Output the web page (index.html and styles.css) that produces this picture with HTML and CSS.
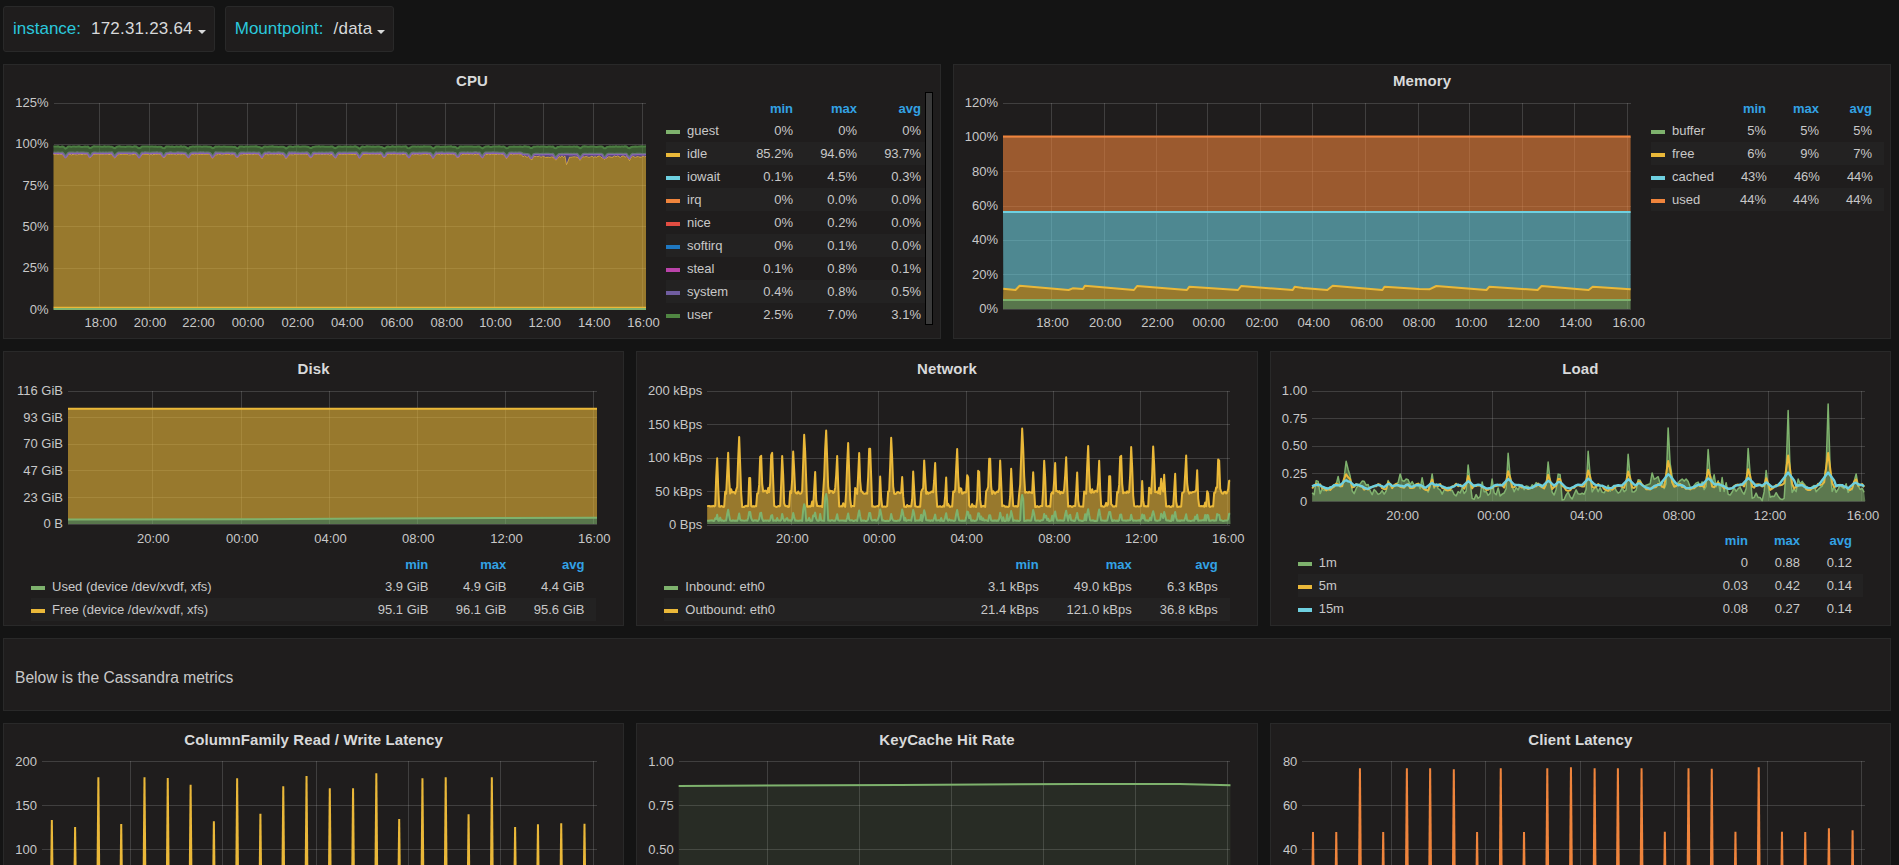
FILE: index.html
```html
<!DOCTYPE html>
<html lang="en">
<head>
<meta charset="utf-8">
<title>Dashboard</title>
<link rel="stylesheet" href="styles.css">
</head>
<body>
<main class="dash">
  <nav class="vars">
    <div class="var"><span class="var-name">instance:</span><span class="var-value">172.31.23.64</span><i class="caret"></i></div>
    <div class="var"><span class="var-name">Mountpoint:</span><span class="var-value">/data</span><i class="caret"></i></div>
  </nav>

  <section class="row two">
    <article class="panel">
      <h2>CPU</h2>
      <div class="side">
        <svg class="chart" id="cpu"></svg>
        <div class="legend lg-cpu">
          <div class="lg head"><span></span><b>min</b><b>max</b><b>avg</b></div>
          <div class="lg"><span class="nm"><i class="c1"></i>guest</span><span>0%</span><span>0%</span><span>0%</span></div>
          <div class="lg"><span class="nm"><i class="c2"></i>idle</span><span>85.2%</span><span>94.6%</span><span>93.7%</span></div>
          <div class="lg"><span class="nm"><i class="c3"></i>iowait</span><span>0.1%</span><span>4.5%</span><span>0.3%</span></div>
          <div class="lg"><span class="nm"><i class="c4"></i>irq</span><span>0%</span><span>0.0%</span><span>0.0%</span></div>
          <div class="lg"><span class="nm"><i class="c5"></i>nice</span><span>0%</span><span>0.2%</span><span>0.0%</span></div>
          <div class="lg"><span class="nm"><i class="c6"></i>softirq</span><span>0%</span><span>0.1%</span><span>0.0%</span></div>
          <div class="lg"><span class="nm"><i class="c7"></i>steal</span><span>0.1%</span><span>0.8%</span><span>0.1%</span></div>
          <div class="lg"><span class="nm"><i class="c8"></i>system</span><span>0.4%</span><span>0.8%</span><span>0.5%</span></div>
          <div class="lg"><span class="nm"><i class="c9"></i>user</span><span>2.5%</span><span>7.0%</span><span>3.1%</span></div>
          <div class="scrollbar"></div>
        </div>
      </div>
    </article>
    <article class="panel">
      <h2>Memory</h2>
      <div class="side">
        <svg class="chart" id="memory"></svg>
        <div class="legend lg-mem">
          <div class="lg head"><span></span><b>min</b><b>max</b><b>avg</b></div>
          <div class="lg"><span class="nm"><i class="c1"></i>buffer</span><span>5%</span><span>5%</span><span>5%</span></div>
          <div class="lg"><span class="nm"><i class="c2"></i>free</span><span>6%</span><span>9%</span><span>7%</span></div>
          <div class="lg"><span class="nm"><i class="c3"></i>cached</span><span>43%</span><span>46%</span><span>44%</span></div>
          <div class="lg"><span class="nm"><i class="c4"></i>used</span><span>44%</span><span>44%</span><span>44%</span></div>
        </div>
      </div>
    </article>
  </section>

  <section class="row three r2">
    <article class="panel">
      <h2>Disk</h2>
      <svg class="chart tall" id="disk"></svg>
      <div class="legend lg-disk">
        <div class="lg head"><span></span><b>min</b><b>max</b><b>avg</b></div>
        <div class="lg"><span class="nm"><i class="c1"></i>Used (device /dev/xvdf, xfs)</span><span>3.9 GiB</span><span>4.9 GiB</span><span>4.4 GiB</span></div>
        <div class="lg"><span class="nm"><i class="c2"></i>Free (device /dev/xvdf, xfs)</span><span>95.1 GiB</span><span>96.1 GiB</span><span>95.6 GiB</span></div>
      </div>
    </article>
    <article class="panel">
      <h2>Network</h2>
      <svg class="chart tall" id="network"></svg>
      <div class="legend lg-net">
        <div class="lg head"><span></span><b>min</b><b>max</b><b>avg</b></div>
        <div class="lg"><span class="nm"><i class="c1"></i>Inbound: eth0</span><span>3.1 kBps</span><span>49.0 kBps</span><span>6.3 kBps</span></div>
        <div class="lg"><span class="nm"><i class="c2"></i>Outbound: eth0</span><span>21.4 kBps</span><span>121.0 kBps</span><span>36.8 kBps</span></div>
      </div>
    </article>
    <article class="panel">
      <h2>Load</h2>
      <svg class="chart short" id="load"></svg>
      <div class="legend lg-load">
        <div class="lg head"><span></span><b>min</b><b>max</b><b>avg</b></div>
        <div class="lg"><span class="nm"><i class="c1"></i>1m</span><span>0</span><span>0.88</span><span>0.12</span></div>
        <div class="lg"><span class="nm"><i class="c2"></i>5m</span><span>0.03</span><span>0.42</span><span>0.14</span></div>
        <div class="lg"><span class="nm"><i class="c3"></i>15m</span><span>0.08</span><span>0.27</span><span>0.14</span></div>
      </div>
    </article>
  </section>

  <section class="panel note"><p>Below is the Cassandra metrics</p></section>

  <section class="row three">
    <article class="panel"><h2>ColumnFamily Read / Write Latency</h2><svg class="chart" id="cf"></svg></article>
    <article class="panel"><h2>KeyCache Hit Rate</h2><svg class="chart" id="keycache"></svg></article>
    <article class="panel"><h2>Client Latency</h2><svg class="chart" id="client"></svg></article>
  </section>
</main>
<script src="charts.js"></script>
</body>
</html>
```
FILE: styles.css
```css
* { box-sizing: border-box; }
html, body { margin: 0; height: 865px; overflow: hidden; background: #141414; }
body { font-family: "Liberation Sans", Arial, sans-serif; color: #c8c8c8; font-size: 13px; }
.dash { display: flex; flex-direction: column; gap: 12px; padding: 6px 8px 0 3px; }
.vars { display: flex; gap: 10px; }
.var { display: flex; align-items: center; height: 46px; padding: 0 8px 0 9px; background: #1f1d1d; border: 1px solid #292929; border-radius: 3px; font-size: 17px; }
.var-name { color: #2bc8dc; margin-right: 10px; }
.var-value { color: #d8d9da; letter-spacing: .2px; }
.caret { width: 0; height: 0; margin: 5px 0 0 5px; border-left: 4px solid transparent; border-right: 4px solid transparent; border-top: 4px solid #d8d9da; }
.row { display: grid; gap: 12px; }
.two { grid-template-columns: 1fr 1fr; }
.three { grid-template-columns: 1fr 1fr 1fr; }
.panel { height: 275px; background: #1f1d1d; border: 1px solid #292929; min-width: 0; }
.panel h2 { height: 32px; margin: 0; padding-top: 7px; font-size: 15px; line-height: 18px; font-weight: 700; letter-spacing: .12px; text-align: center; color: #d8d9da; }
.r2 .panel h2 { padding-top: 8px; }
.note { height: 73px; display: flex; align-items: center; padding: 7px 0 0 11px; font-size: 15.6px; }
.note p { margin: 0; }
.side { display: flex; }
.chart { display: block; width: 100%; height: 241px; flex: 1; min-width: 0; overflow: visible; }
.chart.tall { height: 169px; }
.chart.short { height: 145px; }
.chart text { font: 13px "Liberation Sans", Arial, sans-serif; fill: #c8c8c8; }
.legend { position: relative; flex: none; }
.lg { display: grid; grid-template-columns: 1fr repeat(3, var(--col)); align-items: center; height: 23px; padding-right: var(--pad); text-align: right; white-space: nowrap; }
.lg.head { height: 22px; }
.lg b { color: #33a2e5; font-weight: 700; }
.lg:nth-child(odd):not(.head) { background: #232222; }
.nm { display: flex; align-items: center; text-align: left; }
.nm i { flex: none; width: 14px; height: 4px; margin: 2px 7px 0 0; }
.lg-cpu { width: 259px; margin-right: 15px; --col: 64px; --pad: 4px; }
.lg-mem { width: 233px; margin-right: 6px; --col: 53px; --pad: 12px; }
.lg-disk { margin: 0 27px; --col: 78px; --pad: 12px; }
.lg-net { margin: 0 27px; --pad: 12px; }
.lg-net .lg { grid-template-columns: 1fr 93px 93px 86px; }
.lg-load { margin: 0 27px; --col: 52px; --pad: 11px; }
.c1 { background: #7eb26d; }
.c2 { background: #eab839; }
.c3 { background: #6ed0e0; }
.c4 { background: #ef843c; }
.c5 { background: #e24d42; }
.c6 { background: #1f78c1; }
.c7 { background: #ba43a9; }
.c8 { background: #705da0; }
.c9 { background: #508642; }
.scrollbar { position: absolute; top: -5px; right: -8px; width: 8px; height: 233px; background: #3a3a3a; border: 1px solid #000; }
```
FILE: charts.js
```js
(function () {
  var NS = 'http://www.w3.org/2000/svg';
  var G = '#7eb26d', Y = '#eab839', C = '#6ed0e0', O = '#ef843c', P = '#705da0', D = '#508642';
  var seed = 7;
  function rnd() { seed = (seed * 16807) % 2147483647; return (seed % 100000) / 100000; }
  function el(tag, attrs, parent, txt) {
    var e = document.createElementNS(NS, tag);
    for (var k in attrs) e.setAttribute(k, attrs[k]);
    if (txt) e.textContent = txt;
    parent.appendChild(e);
    return e;
  }
  function d(pts) { return pts.map(function (p) { return p[0].toFixed(1) + ' ' + p[1].toFixed(1); }).join('L'); }
  function map(off, arr) { return arr.map(function (p) { return [off + p[0] / 2.45, p[1]]; }); }

  function setup(id, c) {
    var svg = document.getElementById(id), r = svg.getBoundingClientRect();
    var g = el('g', { transform: 'translate(' + (-r.left) + ' ' + (-r.top) + ')' }, svg);
    function grid(x1, y1, x2, y2) {
      el('line', { x1: x1, y1: y1, x2: x2, y2: y2, stroke: 'rgba(200,200,200,.2)', 'shape-rendering': 'crispEdges' }, g);
    }
    c.ys.forEach(function (y) {
      var py = Math.round(y[1]) + 0.5;
      grid(c.x0, py, c.x1, py);
      el('text', { x: c.x0 - 5, y: y[1] + 4.5, 'text-anchor': 'end' }, g, y[0]);
    });
    c.xs.forEach(function (x) {
      var px = Math.round(x[1]) + 0.5;
      grid(px, c.top, px, c.bot);
      if (c.ly) el('text', { x: x[1] + 1.5, y: c.ly + 4.5, 'text-anchor': 'middle' }, g, x[0]);
    });
    return g;
  }
  function band(g, top, bottom, color, lw, op, lineColor) {
    el('path', { d: 'M' + d(top) + 'L' + d(bottom.slice().reverse()) + 'Z', fill: color, 'fill-opacity': op === undefined ? 0.6 : op }, g);
    if (lw) el('path', { d: 'M' + d(top), fill: 'none', stroke: lineColor || color, 'stroke-width': lw, 'stroke-linejoin': 'round' }, g);
  }
  function flat(x0, x1, y) { return [[x0, y], [x1, y]]; }
  function ticks(labels, xs) { return labels.map(function (l, i) { return [l, xs[i]]; }); }
  var H12 = ['18:00', '20:00', '22:00', '00:00', '02:00', '04:00', '06:00', '08:00', '10:00', '12:00', '14:00', '16:00'];
  var H6 = ['20:00', '00:00', '04:00', '08:00', '12:00', '16:00'];

  /* CPU */
  (function () {
    var x0 = 53.5, x1 = 646;
    var g = setup('cpu', {
      x0: x0, x1: x1, top: 102.5, bot: 309, ly: 322,
      ys: [['125%', 102.5], ['100%', 143.8], ['75%', 185.1], ['50%', 226.4], ['25%', 267.7], ['0%', 309]],
      xs: ticks(H12, [99.2, 148.6, 197.1, 246.5, 296.3, 345.7, 395.5, 445.3, 493.9, 543.3, 592.7, 642])
    });
    var idle = [], sys = [], usr = [];
    for (var x = x0; x <= x1; x += 1.5) {
      var k = ((x - 65.7) % 24.5 + 24.5) % 24.5;
      var dx = Math.min(k, 24.5 - k);
      var dip = dx < 2.5 ? (2.5 - dx) * 1.7 : 0;
      var late = x > 522 ? 1 : 0;
      var i = 154 + rnd() * 0.8 + dip + late * (1.3 + rnd() * 1.6);
      if (Math.abs(x - 567) < 1.6) i = 168 - Math.abs(x - 567) * 7;
      idle.push([x, i]);
      sys.push([x, 152.6 + rnd() * 0.4 + dip * 1.1 + late * 1.3]);
      usr.push([x, 146.3 + rnd() * 0.6 + dip * 0.5]);
    }
    var gb = flat(x0, x1, 309), ib = flat(x0, x1, 307.6);
    band(g, idle, ib, Y, 1);
    el('path', { d: 'M' + d(ib), stroke: Y, 'stroke-width': 1.5, fill: 'none' }, g);
    band(g, sys, idle, P, 2.5, 0.6, '#8a62b8');
    band(g, usr, sys, D, 2, 0.6, '#4c7f42');
    el('path', { d: 'M' + d(gb), stroke: G, 'stroke-width': 2, fill: 'none' }, g);
  })();

  /* Memory */
  (function () {
    var x0 = 1003, x1 = 1630.6;
    var g = setup('memory', {
      x0: x0, x1: x1, top: 102.5, bot: 309, ly: 322,
      ys: [['120%', 102.5], ['100%', 136.9], ['80%', 171.2], ['60%', 205.6], ['40%', 239.9], ['20%', 274.3], ['0%', 308.6]],
      xs: ticks(H12, [1051, 1103.7, 1156, 1207.3, 1260.4, 1312.2, 1365.3, 1417.6, 1469.4, 1522, 1574.3, 1627.3])
    });
    var saw = map(640, [[890, 686], [920, 690], [930, 677], [1050, 690], [1060, 685], [1085, 687], [1090, 677], [1210, 690], [1218, 678], [1340, 690], [1346, 680], [1465, 690], [1473, 678], [1568, 687]])
      .concat(map(1260, [[0, 682], [80, 690], [85, 680], [105, 684], [165, 690], [178, 677], [300, 690], [305, 680], [390, 687], [415, 688], [432, 678], [555, 690], [562, 680], [680, 690], [690, 678], [805, 690], [815, 680], [908, 688]]))
      .map(function (p) { return [p[0], 60 + p[1] / 3]; })
      .filter(function (p, i, a) { return i === 0 || p[0] > a[i - 1][0]; });
    var base = flat(x0, x1, 309), buf = flat(x0, x1, 300), cached = flat(x0, x1, 212), used = flat(x0, x1, 136.5);
    band(g, used, cached, O, 2);
    band(g, cached, saw, C, 2);
    band(g, saw, buf, Y, 2);
    band(g, buf, base, G, 2);
  })();

  /* Disk */
  (function () {
    var x0 = 68, x1 = 597;
    var g = setup('disk', {
      x0: x0, x1: x1, top: 390.5, bot: 524, ly: 538.3,
      ys: [['116 GiB', 390.5], ['93 GiB', 417], ['70 GiB', 443.5], ['47 GiB', 470.3], ['23 GiB', 497], ['0 B', 523.7]],
      xs: ticks(H6, [151.8, 240.8, 329, 416.7, 505, 592.7])
    });
    var used = [[x0, 519.5], [250, 519.2], [376, 518.6], [500, 518], [x1, 517.8]];
    band(g, flat(x0, x1, 408.7), used, Y, 2);
    band(g, used, flat(x0, x1, 524), G, 2);
  })();

  /* Network */
  (function () {
    var x0 = 707.5, x1 = 1230.8;
    var g = setup('network', {
      x0: x0, x1: x1, top: 390.5, bot: 524.5, ly: 538.3,
      ys: [['200 kBps', 390.5], ['150 kBps', 424], ['100 kBps', 457.5], ['50 kBps', 491], ['0 Bps', 524.5]],
      xs: ticks(H6, [791.2, 878.2, 965.5, 1053.3, 1140.2, 1227.1])
    });
    var sp = [[214, 312], [241, 297], [268, 252], [294, 342], [321, 277], [348, 270], [374, 305], [401, 290], [428, 238], [454, 350], [481, 227], [508, 305], [535, 268], [562, 300], [588, 254], [614, 370], [641, 252], [668, 368], [695, 350], [722, 315], [748, 323], [775, 368], [802, 284], [828, 337], [855, 322], [882, 284], [908, 322], [935, 345], [962, 223], [989, 352], [1016, 316], [1042, 323], [1069, 307], [1096, 355], [1123, 277], [1150, 323], [1176, 337], [1203, 277], [1229, 280], [1256, 380], [1283, 275], [1303, 358], [1310, 358], [1336, 355], [1363, 302], [1390, 348], [1416, 385], [1443, 288], [1470, 350]];
    var peaks = sp.map(function (p) { return [630 + p[0] / 2.45, 350 + p[1] / 3, 514 - rnd() * 6]; });
    peaks[10][2] = 493; peaks[28][2] = 494; peaks[8][2] = 503;
    var out = [], inn = [];
    for (var x = x0; x <= x1; x += 1) {
      var zx = (x - 630) * 2.45;
      var ph = ((zx - 232) % 80 + 80) % 80;
      var high = zx >= 232 && ph < 38;
      var y = high ? 491 + rnd() * 3 - (rnd() < 0.2 ? rnd() * 4 : 0) : 505.8 + rnd() * 1.2;
      if (zx < 196) y = 506 - (rnd() < 0.3 ? 9 : 0);
      var gy = 521 - rnd() * 0.8;
      if (!high && rnd() < 0.07) y -= rnd() * 6;
      if (rnd() < 0.09) gy -= rnd() * 7;
      peaks.forEach(function (p) {
        var dx = Math.abs(x - p[0]);
        if (dx < 2.2) y = Math.min(y, p[1] + dx * 28);
        if (dx < 1.6) gy = Math.min(gy, p[2] + dx * 6);
      });
      out.push([x, y]); inn.push([x, gy]);
    }
    band(g, out, inn, Y, 2);
    band(g, inn, flat(x0, x1, 524), G, 2);
  })();

  /* Load */
  (function () {
    var x0 = 1311.8, x1 = 1865, top = 390.5, bot = 501.3, s = 110.8;
    var g = setup('load', {
      x0: x0, x1: x1, top: top, bot: bot, ly: 515.3,
      ys: [['1.00', 390.5], ['0.75', 418], ['0.50', 445.6], ['0.25', 473.3], ['0', 501.3]],
      xs: ticks(H6, [1400.8, 1491.8, 1584.5, 1677.1, 1768.2, 1861.2])
    });
    var raw = [[209, 310], [217, 325], [315, 370], [360, 385], [420, 360], [510, 330], [608, 290], [706, 320], [732, 333], [804, 283], [902, 293], [928, 358], [1000, 203], [1098, 277], [1120, 375], [1196, 273], [1240, 350], [1293, 177], [1391, 157], [1458, 347]];
    var pk = raw.map(function (p) { return [1260 + p[0] / 2.45, (454 - p[1]) / 333]; });
    var l1 = [], l5 = [], l15 = [];
    var w1 = 0.08;
    for (var x = x0; x <= x1; x += 2) {
      w1 += (0.09 - w1) * 0.25 + (rnd() - 0.5) * 0.09;
      var v1 = Math.max(0.005, w1);
      if (rnd() < 0.07) v1 += 0.08;
      var wave = Math.sin((x - x0) / 3.2);
      var b = 0.115 + wave * 0.022 + rnd() * 0.025;
      var c = 0.128 + wave * 0.016 + rnd() * 0.008;
      pk.forEach(function (p) {
        var dx = Math.abs(x - p[0]);
        if (dx < 3) v1 = Math.max(v1, p[1] * (1 - dx / 3));
        if (dx < 5) b = Math.max(b, (0.1 + p[1] * 0.38) * (1 - dx / 6.5));
        if (dx < 8) c = Math.max(c, (0.12 + Math.min(p[1] * 0.17, 0.14)) * (1 - dx / 22));
      });
      l1.push([x, bot - v1 * s]); l5.push([x, bot - b * s]); l15.push([x, bot - c * s]);
    }
    var base = flat(x0, x1, bot);
    band(g, l1, base, G, 1.5, 0.55);
    band(g, l5, base, Y, 2, 0.06);
    band(g, l15, base, C, 2.4, 0.06);
  })();

  /* Cassandra row */
  function spikes(g, off, list, color, bot) {
    list.forEach(function (p) {
      var x = off + p[0] / 2.45, y = 640 + p[1] / 3;
      el('path', { d: 'M' + (x - 2.4) + ' ' + bot + 'L' + (x - 1) + ' ' + y + 'L' + (x + 1) + ' ' + y + 'L' + (x + 2.4) + ' ' + bot + 'Z', fill: color }, g);
    });
  }
  (function () {
    var g = setup('cf', {
      x0: 42, x1: 597, top: 761.3, bot: 937,
      ys: [['200', 761.3], ['150', 805.3], ['100', 849.3]],
      xs: ticks(H6, [129.8, 222.4, 316, 408, 500.4, 592.7])
    });
    spikes(g, 0, [[127, 540], [184, 561], [241, 412], [297, 552], [354, 412], [411, 414], [467, 434], [524, 544], [581, 415], [638, 521], [694, 439], [751, 408], [808, 445], [865, 445], [922, 400], [978, 537], [1035, 415], [1092, 412], [1148, 523], [1205, 412], [1262, 561], [1318, 553], [1375, 550], [1432, 551]], Y, 937);
  })();
  (function () {
    var x0 = 679, x1 = 1230.8;
    var g = setup('keycache', {
      x0: x0, x1: x1, top: 761.3, bot: 937,
      ys: [['1.00', 761.3], ['0.75', 805.3], ['0.50', 849.3]],
      xs: ticks(H6, [767.1, 858.6, 950.8, 1043, 1134.5, 1227.1])
    });
    band(g, [[x0, 786], [900, 785], [1080, 784], [1180, 784], [x1, 785.3]], flat(x0, x1, 937), G, 2, 0.1);
  })();
  (function () {
    var g = setup('client', {
      x0: 1302, x1: 1864.5, top: 761.3, bot: 937,
      ys: [['80', 761.3], ['60', 805.3], ['40', 849.3]],
      xs: ticks(H6, [1391.4, 1485.3, 1580, 1673.9, 1767.3, 1861.2])
    });
    spikes(g, 1260, [[129, 576], [186, 576], [244, 385], [301, 576], [359, 385], [416, 385], [474, 388], [531, 576], [589, 385], [646, 576], [703, 385], [761, 382], [819, 385], [876, 385], [934, 385], [991, 575], [1049, 385], [1106, 386], [1164, 575], [1221, 382], [1278, 575], [1335, 576], [1393, 565], [1451, 571]], O, 937);
  })();
})();
```
